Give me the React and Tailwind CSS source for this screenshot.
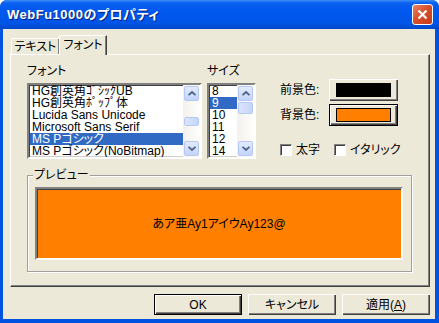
import React from "react";

const fonts = [
  "HG創英角ｺﾞｼｯｸUB",
  "HG創英角ﾎﾟｯﾌﾟ体",
  "Lucida Sans Unicode",
  "Microsoft Sans Serif",
  "MS Pゴシック",
  "MS Pゴシック(NoBitmap)",
];
const sizes = ["8", "9", "10", "11", "12", "14"];

function Arrow({ down }) {
  return (
    <svg width="8" height="5" viewBox="0 0 8 5">
      <path
        d={down ? "M0.5 0.8 L4 4 L7.5 0.8" : "M0.5 4.2 L4 1 L7.5 4.2"}
        fill="none"
        stroke="#4d6185"
        strokeWidth="1.8"
      />
    </svg>
  );
}

function ScrollBtn({ down }) {
  return (
    <div className="w-[15px] h-[15px] flex items-center justify-center rounded-[2px] border border-[#b6c9f4] bg-[linear-gradient(to_bottom,#e3ebfe,#c2d3fc)]">
      <Arrow down={down} />
    </div>
  );
}

function ScrollBar({ thumbTop, thumbH }) {
  return (
    <div className="w-[17px] h-full flex flex-col items-center py-[1px] bg-[linear-gradient(to_right,#f3f1ec,#fefefb)]">
      <ScrollBtn />
      <div
        className="w-[15px] rounded-[2px] border border-[#b6c9f4] bg-[linear-gradient(to_right,#dbe5fd,#c6d6fc)]"
        style={{ marginTop: thumbTop, height: thumbH }}
      />
      <div className="flex-1" />
      <ScrollBtn down />
    </div>
  );
}

function ListBox({ items, selected, width, thumbTop, thumbH }) {
  return (
    <div
      className="h-[76px] flex border-2 border-t-[#808080] border-l-[#808080] border-b-white border-r-white shadow-[inset_1px_1px_0_#404040,inset_-1px_-1px_0_#d4d0c8] bg-white"
      style={{ width }}
    >
      <div className="flex-1 pl-[1px] overflow-hidden">
        {items.map((it, i) => (
          <div
            key={it}
            className={
              "h-[12px] leading-[12px] pl-[2px] whitespace-nowrap " +
              (i === selected ? "bg-[#316ac5] text-white" : "text-black")
            }
          >
            {it}
          </div>
        ))}
      </div>
      <ScrollBar thumbTop={thumbTop} thumbH={thumbH} />
    </div>
  );
}

function ColorBtn({ color, focused }) {
  return (
    <div
      className={
        "w-[69px] h-[22px] flex items-center justify-center bg-[#ece9d8] " +
        (focused
          ? "border border-black shadow-[inset_1px_1px_0_white,inset_-1px_-1px_0_#404040,inset_-2px_-2px_0_#808080]"
          : "shadow-[inset_1px_1px_0_white,inset_-1px_-1px_0_#404040,inset_-2px_-2px_0_#808080]")
      }
    >
      <div
        className="w-[55px] h-[14px] border border-black"
        style={{ backgroundColor: color }}
      />
    </div>
  );
}

function CheckBox({ label }) {
  return (
    <div className="flex items-center">
      <div className="w-[12px] h-[12px] bg-white border border-t-[#808080] border-l-[#808080] border-b-white border-r-white shadow-[inset_1px_1px_0_#404040]" />
      <span className="ml-[4px] leading-[12px] whitespace-nowrap">{label}</span>
    </div>
  );
}

function Button({ children, def }) {
  return (
    <div
      className={
        "w-[88px] h-[21px] flex items-center justify-center bg-[#ece9d8] " +
        (def
          ? "border border-black shadow-[inset_1px_1px_0_white,inset_-1px_-1px_0_#404040,inset_-2px_-2px_0_#808080]"
          : "shadow-[inset_1px_1px_0_white,inset_-1px_-1px_0_#404040,inset_-2px_-2px_0_#808080]")
      }
    >
      {children}
    </div>
  );
}

export default function App() {
  return (
    <div className="w-[439px] h-[323px] flex flex-col bg-[#0053e1] rounded-t-[7px] overflow-hidden text-[12px] text-black [font-family:Liberation_Sans,Noto_Sans_CJK_JP,sans-serif] [font-feature-settings:'palt']">
      {/* TITLE BAR */}
      <div className="h-[29px] flex items-center justify-between pl-[7px] pr-[6px] bg-[linear-gradient(to_bottom,#3d8ff5_0%,#0a61f0_10%,#0058ee_35%,#0055e8_80%,#0047c8_100%)]">
        <span className="text-white font-bold text-[13px] tracking-[0.5px] [text-shadow:1px_1px_0_#0a1e7a]">
          WebFu1000のプロパティ
        </span>
        <div className="w-[21px] h-[21px] rounded-[3px] border border-white flex items-center justify-center bg-[linear-gradient(135deg,#e8856a,#d9502c_45%,#c23a17)]">
          <svg width="11" height="11" viewBox="0 0 11 11">
            <path d="M1.5 1.5 L9.5 9.5 M9.5 1.5 L1.5 9.5" stroke="white" strokeWidth="2.2" />
          </svg>
        </div>
      </div>

      {/* CLIENT */}
      <div className="flex-1 ml-[3px] mr-[4px] mb-[4px] bg-[#ece9d8] flex flex-col pl-[7px] pt-[6px]">
        {/* TABS */}
        <div className="flex items-end h-[19px] pl-[1px]">
          <div className="w-[48px] h-[16px] leading-[14px] whitespace-nowrap border-t border-l border-white rounded-tl-[2px] shadow-[inset_-1px_0_0_#808080] flex items-center justify-center">
            テキスト
          </div>
          <div className="relative z-10 -mb-[1px] w-[48px] h-[20px] leading-[16px] whitespace-nowrap bg-[#ece9d8] border-t border-l border-white rounded-tl-[2px] border-r border-r-[#404040] shadow-[inset_-1px_0_0_#808080] flex items-start justify-center pt-[1px]">
            フォント
          </div>
        </div>

        {/* PANEL */}
        <div className="h-[233px] w-[420px] border border-t-white border-l-white border-r-[#404040] border-b-[#404040] shadow-[inset_-1px_-1px_0_#808080] pl-[16px] pt-[10px]">
          <div className="flex">
            <div className="w-[175px]">
              <div className="h-[12px] leading-[12px] mb-[6px]">フォント</div>
              <ListBox items={fonts} selected={4} width={175} thumbTop={16} thumbH={9} />
            </div>
            <div className="ml-[5px]">
              <div className="h-[12px] leading-[12px] mb-[6px]">サイズ</div>
              <ListBox items={sizes} selected={1} width={49} thumbTop={1} thumbH={12} />
            </div>
            <div className="ml-[24px] mt-[14px] flex flex-col">
              <div className="flex items-center">
                <span className="w-[49px]">前景色:</span>
                <ColorBtn color="#000000" />
              </div>
              <div className="flex items-center mt-[3px]">
                <span className="w-[49px]">背景色:</span>
                <ColorBtn color="#ff8000" focused />
              </div>
              <div className="flex items-center mt-[18px] gap-[14px]">
                <CheckBox label="太字" />
                <CheckBox label="イタリック" />
              </div>
            </div>
          </div>

          {/* PREVIEW GROUP */}
          <div className="relative mt-[16px] w-[385px] h-[97px] border border-[#a0a0a0] shadow-[inset_1px_1px_0_white,1px_1px_0_white] pl-[7px] pt-[11px]">
            <span className="absolute -top-[7px] left-[5px] px-[1px] leading-[12px] bg-[#ece9d8]">
              プレビュー
            </span>
            <div className="w-[368px] h-[73px] bg-[#ff8000] border-2 border-t-[#808080] border-l-[#808080] border-b-white border-r-white shadow-[inset_1px_1px_0_#404040] flex items-center justify-center">
              あア亜Ay1アイウAy123@
            </div>
          </div>
        </div>

        {/* BUTTONS */}
        <div className="flex justify-end gap-[6px] mt-[7px] pr-[5px]">
          <Button def>OK</Button>
          <Button>キャンセル</Button>
          <Button>
            適用(<span className="underline">A</span>)
          </Button>
        </div>
      </div>
    </div>
  );
}
